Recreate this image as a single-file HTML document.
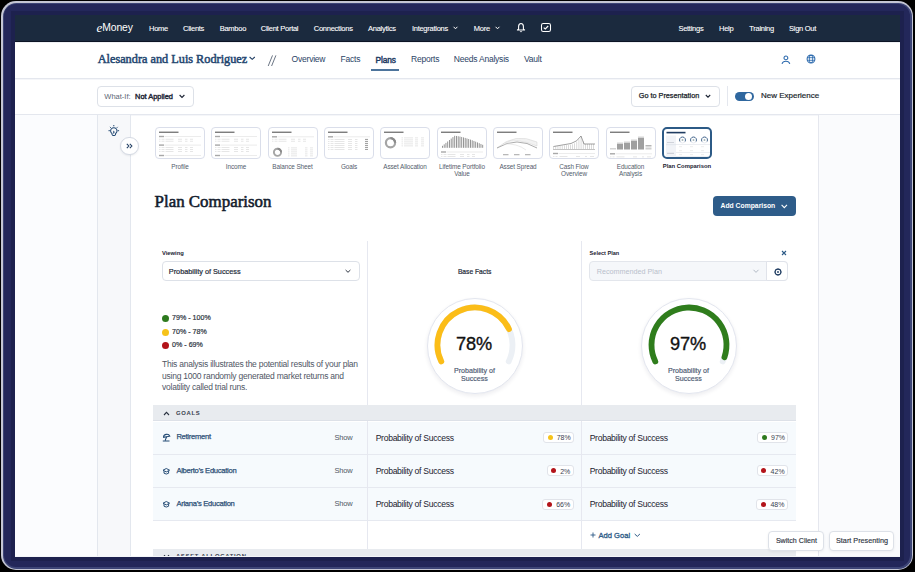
<!DOCTYPE html>
<html><head><meta charset="utf-8">
<style>
*{margin:0;padding:0;box-sizing:border-box}
html,body{width:915px;height:572px;overflow:hidden;background:#000}
body{position:relative;font-family:"Liberation Sans",sans-serif}
.a{position:absolute}
.t{position:absolute;white-space:nowrap;line-height:1}
svg{position:absolute;overflow:visible}
#frame{left:1px;top:1px;width:912px;height:569px;border-radius:15px;background:#c4c6d4}
#frame2{left:2.5px;top:2.5px;width:909px;height:566px;border-radius:13.5px;background:#3d4577}
#frame3{left:4px;top:4px;width:906px;height:562.5px;border-radius:12px;background:#23275a}
#app{left:15px;top:15px;width:885px;height:542px;background:#fff;box-shadow:0 0 0 4px #1d214e}
.nv{color:#fff;font-size:7.5px;letter-spacing:-0.26px;top:24.8px;-webkit-text-stroke:0.1px #fff}
.hb{background:#e4e7ee}
.tab{color:#2a4366;font-size:8.5px;letter-spacing:-0.22px;top:55.3px}
.btn{border:1px solid #dde1e8;border-radius:4px;background:#fff}
.thumb{position:absolute;top:127px;width:50px;height:32px;border:1px solid #dadeea;border-radius:4px;background:#fff;overflow:hidden}
.thumb svg{}
.tl{position:absolute;font-size:6.4px;letter-spacing:-0.1px;color:#545d6c;text-align:center;width:70px;line-height:7px}
.vd{background:#e6e8f0;width:1px}
.row{left:153px;width:643px;height:33px;background:#f6fafd;border-bottom:1px solid #e6e9f0}
.ptxt{font-size:8.6px;letter-spacing:-0.3px;color:#1c2230}
.badge{position:absolute;height:11px;border:1px solid #e1e4ea;border-radius:3px;background:#fff}
.bt{position:absolute;font-size:7px;color:#3a4250;line-height:1;white-space:nowrap}
.dot{position:absolute;border-radius:50%}
.gn{font-size:7.6px;letter-spacing:-0.28px;color:#2d5077;-webkit-text-stroke:0.25px #2d5077}
.show{font-size:7.5px;letter-spacing:-0.2px;color:#4f5866}
</style></head><body>
<div id="frame" class="a"></div><div id="frame2" class="a"></div><div id="frame3" class="a"></div>
<div id="app" class="a"></div>

<!-- ===== top nav ===== -->
<div class="a" style="left:15px;top:15px;width:885px;height:26px;background:#1b2a3e"></div>
<div class="a" style="left:15px;top:41px;width:885px;height:1px;background:#0c1424"></div><div class="a" style="left:15px;top:42px;width:885px;height:1px;background:#eef0f4"></div>
<div class="t" style="left:96.6px;top:20.5px;font-size:13px;color:#fff;font-family:'Liberation Serif',serif;font-style:italic">e</div><div class="t" style="left:102.3px;top:23px;font-size:10.4px;letter-spacing:-0.15px;color:#fff">Money</div>
<div class="t nv" style="left:149px">Home</div>
<div class="t nv" style="left:183px">Clients</div>
<div class="t nv" style="left:219.7px">Bamboo</div>
<div class="t nv" style="left:260.8px">Client Portal</div>
<div class="t nv" style="left:313.8px">Connections</div>
<div class="t nv" style="left:368px">Analytics</div>
<div class="t nv" style="left:411.9px">Integrations</div>
<div class="t nv" style="left:473.8px">More</div>
<svg style="left:453px;top:26px" width="5" height="4" viewBox="0 0 5 4"><path d="M0.6 0.8 L2.5 2.8 L4.4 0.8" fill="none" stroke="#fff" stroke-width="1"/></svg>
<svg style="left:495px;top:26px" width="5" height="4" viewBox="0 0 5 4"><path d="M0.6 0.8 L2.5 2.8 L4.4 0.8" fill="none" stroke="#fff" stroke-width="1"/></svg>
<!-- bell -->
<svg style="left:516px;top:22px" width="10" height="12" viewBox="0 0 10 12"><path d="M2.6 7.3 V4.6 Q2.6 1.5 5 1.5 Q7.4 1.5 7.4 4.6 V7.3 L8.6 8 H1.4 Z" fill="none" stroke="#fff" stroke-width="1.1" stroke-linejoin="round"/><path d="M3.7 9.3 Q5 11.4 6.3 9.3 Z" fill="#fff"/></svg>
<!-- checkbox -->
<svg style="left:541px;top:23px" width="10" height="10" viewBox="0 0 10 10"><rect x="0.5" y="0.5" width="9" height="8" rx="1.8" fill="none" stroke="#fff" stroke-width="1.05"/><path d="M2.7 4.6 L4.3 6 L7.2 3" fill="none" stroke="#fff" stroke-width="1.1"/></svg>
<div class="t nv" style="left:678.4px">Settings</div>
<div class="t nv" style="left:719px">Help</div>
<div class="t nv" style="left:749.2px">Training</div>
<div class="t nv" style="left:789px">Sign Out</div>

<!-- ===== header row 2 ===== -->
<div class="t" style="left:97.7px;top:52.7px;font-family:'Liberation Serif',serif;font-size:12.28px;-webkit-text-stroke:0.5px #234670;color:#234670">Alesandra and Luis Rodriguez</div>
<svg style="left:249.3px;top:56.2px" width="7" height="5" viewBox="0 0 7 5"><path d="M0.6 1 L3.2 3.4 L5.8 1" fill="none" stroke="#1f3c61" stroke-width="1.05"/></svg>
<svg style="left:267px;top:55px" width="10" height="12" viewBox="0 0 10 12"><path d="M5.5 0.4 L1.2 11 M8.9 0.4 L4.6 11" fill="none" stroke="#6b7584" stroke-width="1"/></svg>
<div class="t tab" style="left:291.6px">Overview</div>
<div class="t tab" style="left:340.6px">Facts</div>
<div class="t tab" style="left:375.5px;font-size:8.3px;letter-spacing:-0.1px;top:55.5px;color:#1f3c63;-webkit-text-stroke:0.45px #1f3c63">Plans</div>
<div class="t tab" style="left:411px">Reports</div>
<div class="t tab" style="left:453.8px">Needs Analysis</div>
<div class="t tab" style="left:523.9px">Vault</div>
<div class="a" style="left:371px;top:69px;width:28px;height:2px;background:#4d749c"></div>
<!-- person -->
<svg style="left:781px;top:54.5px" width="10" height="10" viewBox="0 0 10 10"><circle cx="4.9" cy="2.9" r="1.9" fill="none" stroke="#2d6aad" stroke-width="1.05"/><path d="M1 8.8 A4 3.4 0 0 1 8.8 8.8" fill="none" stroke="#2d6aad" stroke-width="1.05"/></svg>
<!-- globe -->
<svg style="left:806px;top:54.3px" width="10" height="10" viewBox="0 0 10 10"><circle cx="5" cy="5" r="3.9" fill="none" stroke="#2d6aad" stroke-width="1.05"/><ellipse cx="5" cy="5" rx="1.7" ry="3.9" fill="none" stroke="#2d6aad" stroke-width="0.85"/><path d="M1.2 3.7 H8.8 M1.2 6.3 H8.8" stroke="#2d6aad" stroke-width="0.85"/></svg>
<div class="a hb" style="left:15px;top:78px;width:885px;height:1px;box-shadow:0 0.5px 0.5px #eceef3"></div>

<!-- ===== row 3 ===== -->
<div class="a btn" style="left:97px;top:86px;width:97px;height:20.5px"></div>
<div class="t" style="left:104.3px;top:92.6px;font-size:7.5px;color:#5d6675">What-If:</div>
<div class="t" style="left:135.1px;top:92.7px;font-size:7.4px;color:#1e2636;-webkit-text-stroke:0.4px #1e2636">Not Applied</div>
<svg style="left:179px;top:94px" width="7" height="5" viewBox="0 0 7 5"><path d="M0.6 1 L3 3.4 L5.4 1" fill="none" stroke="#1e2636" stroke-width="1.15"/></svg>
<div class="a btn" style="left:631px;top:86px;width:88.5px;height:20.5px"></div>
<div class="t" style="left:638.8px;top:92.3px;font-size:7.26px;color:#1a1f2b;-webkit-text-stroke:0.25px #1a1f2b">Go to Presentation</div>
<svg style="left:705px;top:94px" width="6" height="5" viewBox="0 0 6 5"><path d="M0.8 1 L3 3.2 L5.2 1" fill="none" stroke="#1e2636" stroke-width="1.1"/></svg>
<div class="a hb" style="left:727px;top:86px;width:1px;height:20px"></div>
<div class="a" style="left:735px;top:91.5px;width:18.5px;height:9.5px;border-radius:5px;background:#2f679f"></div>
<div class="a" style="left:744.5px;top:92.8px;width:7px;height:7px;border-radius:50%;background:#fff"></div>
<div class="t" style="left:761.1px;top:91.6px;font-size:7.97px;color:#1a1f2b;-webkit-text-stroke:0.2px #1a1f2b">New Experience</div>
<div class="a hb" style="left:15px;top:114px;width:885px;height:1px;box-shadow:0 0.5px 0.5px #eceef3"></div>

<!-- ===== side areas ===== -->
<div class="a" style="left:15px;top:115px;width:82px;height:442px;background:#fbfcfe"></div>
<div class="a" style="left:97px;top:115px;width:34px;height:442px;background:#f7f8fa;border-left:1px solid #e3e7ee;border-right:1.5px solid #e3e7ee"></div>
<div class="a" style="left:818px;top:115px;width:82px;height:442px;background:#fafbfd;border-left:1.5px solid #e5e7ee"></div>
<!-- bulb -->
<svg style="left:108px;top:124px" width="12" height="13" viewBox="0 0 12 13"><path d="M3.96 9.52 A3.2 3.2 0 1 1 7.64 9.52 L7.4 10.8 Q7.3 11.5 6.6 11.5 H5 Q4.3 11.5 4.2 10.8 Z" fill="none" stroke="#234a74" stroke-width="1.05" stroke-linejoin="round"/><path d="M5.8 1 V2.3 M0.5 6.7 H1.9 M9.7 6.7 H11.1 M1.9 2.9 L2.8 3.8 M9.7 2.9 L8.8 3.8" stroke="#234a74" stroke-width="1"/><path d="M5 8 L5.8 6.6 L6.6 8 L5.8 10.3 Z" fill="#234a74"/></svg>
<div class="a" style="left:120.3px;top:137.2px;width:18.3px;height:18.3px;border-radius:50%;background:#fff;border:1px solid #d5dae3;box-shadow:0 1px 2px rgba(30,40,70,.08)"></div>
<svg style="left:126px;top:143px" width="7" height="6" viewBox="0 0 7 6"><path d="M0.8 0.8 L2.9 3 L0.8 5.2 M3.8 0.8 L5.9 3 L3.8 5.2" fill="none" stroke="#1f3c61" stroke-width="1.05"/></svg>

<!-- ===== thumbnails ===== -->
<div id="thumbs"><div class="thumb" style="left:155.00px"><svg style="left:-1px;top:-1px" width="50" height="32" viewBox="0 0 50 32"><rect x="4" y="4.6" width="19.5" height="1.3" fill="#707070"/><rect x="4" y="8.8" width="5" height="1.4" fill="#a8a8a8"/><rect x="9.5" y="9" width="36.5" height="1" fill="#ececec"/><rect x="4" y="11.8" width="1.5" height="0.8" fill="#e0e0e0"/><rect x="6.5" y="11.8" width="3" height="0.8" fill="#e0e0e0"/><rect x="10.5" y="11.8" width="8" height="0.8" fill="#e0e0e0"/><rect x="23" y="11.8" width="4" height="0.8" fill="#e0e0e0"/><rect x="30" y="11.8" width="2.5" height="0.8" fill="#e0e0e0"/><rect x="35" y="11.8" width="3" height="0.8" fill="#e0e0e0"/><rect x="4" y="13.8" width="1.5" height="0.8" fill="#e0e0e0"/><rect x="6.5" y="13.8" width="3" height="0.8" fill="#e0e0e0"/><rect x="10.5" y="13.8" width="8" height="0.8" fill="#e0e0e0"/><rect x="23" y="13.8" width="4" height="0.8" fill="#e0e0e0"/><rect x="30" y="13.8" width="2.5" height="0.8" fill="#e0e0e0"/><rect x="35" y="13.8" width="3" height="0.8" fill="#e0e0e0"/><rect x="4" y="17.400000000000002" width="5" height="1.4" fill="#a8a8a8"/><rect x="9.5" y="17.6" width="36.5" height="1" fill="#ececec"/><rect x="4" y="20" width="1.5" height="0.8" fill="#e0e0e0"/><rect x="6.5" y="20" width="3" height="0.8" fill="#e0e0e0"/><rect x="10.5" y="20" width="8" height="0.8" fill="#e0e0e0"/><rect x="23" y="20" width="4" height="0.8" fill="#e0e0e0"/><rect x="30" y="20" width="2.5" height="0.8" fill="#e0e0e0"/><rect x="35" y="20" width="3" height="0.8" fill="#e0e0e0"/><rect x="4" y="22" width="1.5" height="0.8" fill="#e0e0e0"/><rect x="6.5" y="22" width="3" height="0.8" fill="#e0e0e0"/><rect x="10.5" y="22" width="8" height="0.8" fill="#e0e0e0"/><rect x="23" y="22" width="4" height="0.8" fill="#e0e0e0"/><rect x="30" y="22" width="2.5" height="0.8" fill="#e0e0e0"/><rect x="35" y="22" width="3" height="0.8" fill="#e0e0e0"/><rect x="4" y="24" width="1.5" height="0.8" fill="#e0e0e0"/><rect x="6.5" y="24" width="3" height="0.8" fill="#e0e0e0"/><rect x="10.5" y="24" width="8" height="0.8" fill="#e0e0e0"/><rect x="23" y="24" width="4" height="0.8" fill="#e0e0e0"/><rect x="30" y="24" width="2.5" height="0.8" fill="#e0e0e0"/><rect x="35" y="24" width="3" height="0.8" fill="#e0e0e0"/><rect x="4" y="27.8" width="5" height="1.4" fill="#a8a8a8"/><rect x="9.5" y="28" width="36.5" height="1" fill="#ececec"/></svg></div>
<div class="tl" style="left:145.00px;top:162.7px">Profile</div>
<div class="thumb" style="left:211.00px"><svg style="left:-1px;top:-1px" width="50" height="32" viewBox="0 0 50 32"><rect x="4" y="4.6" width="19.5" height="1.3" fill="#707070"/><rect x="4" y="8.8" width="5" height="1.4" fill="#a8a8a8"/><rect x="9.5" y="9" width="36.5" height="1" fill="#ececec"/><rect x="4" y="11.8" width="1.5" height="0.8" fill="#e0e0e0"/><rect x="6.5" y="11.8" width="3" height="0.8" fill="#e0e0e0"/><rect x="10.5" y="11.8" width="8" height="0.8" fill="#e0e0e0"/><rect x="23" y="11.8" width="4" height="0.8" fill="#e0e0e0"/><rect x="30" y="11.8" width="2.5" height="0.8" fill="#e0e0e0"/><rect x="35" y="11.8" width="3" height="0.8" fill="#e0e0e0"/><rect x="4" y="13.8" width="1.5" height="0.8" fill="#e0e0e0"/><rect x="6.5" y="13.8" width="3" height="0.8" fill="#e0e0e0"/><rect x="10.5" y="13.8" width="8" height="0.8" fill="#e0e0e0"/><rect x="23" y="13.8" width="4" height="0.8" fill="#e0e0e0"/><rect x="30" y="13.8" width="2.5" height="0.8" fill="#e0e0e0"/><rect x="35" y="13.8" width="3" height="0.8" fill="#e0e0e0"/><rect x="4" y="17.400000000000002" width="5" height="1.4" fill="#a8a8a8"/><rect x="9.5" y="17.6" width="36.5" height="1" fill="#ececec"/><rect x="4" y="20" width="1.5" height="0.8" fill="#e0e0e0"/><rect x="6.5" y="20" width="3" height="0.8" fill="#e0e0e0"/><rect x="10.5" y="20" width="8" height="0.8" fill="#e0e0e0"/><rect x="23" y="20" width="4" height="0.8" fill="#e0e0e0"/><rect x="30" y="20" width="2.5" height="0.8" fill="#e0e0e0"/><rect x="35" y="20" width="3" height="0.8" fill="#e0e0e0"/><rect x="4" y="22" width="1.5" height="0.8" fill="#e0e0e0"/><rect x="6.5" y="22" width="3" height="0.8" fill="#e0e0e0"/><rect x="10.5" y="22" width="8" height="0.8" fill="#e0e0e0"/><rect x="23" y="22" width="4" height="0.8" fill="#e0e0e0"/><rect x="30" y="22" width="2.5" height="0.8" fill="#e0e0e0"/><rect x="35" y="22" width="3" height="0.8" fill="#e0e0e0"/><rect x="4" y="24" width="1.5" height="0.8" fill="#e0e0e0"/><rect x="6.5" y="24" width="3" height="0.8" fill="#e0e0e0"/><rect x="10.5" y="24" width="8" height="0.8" fill="#e0e0e0"/><rect x="23" y="24" width="4" height="0.8" fill="#e0e0e0"/><rect x="30" y="24" width="2.5" height="0.8" fill="#e0e0e0"/><rect x="35" y="24" width="3" height="0.8" fill="#e0e0e0"/><rect x="4" y="27.8" width="5" height="1.4" fill="#a8a8a8"/><rect x="9.5" y="28" width="36.5" height="1" fill="#ececec"/></svg></div>
<div class="tl" style="left:201.00px;top:162.7px">Income</div>
<div class="thumb" style="left:267.50px"><svg style="left:-1px;top:-1px" width="50" height="32" viewBox="0 0 50 32"><rect x="4" y="4.6" width="19.5" height="1.3" fill="#707070"/><rect x="4" y="9.100000000000001" width="5" height="1.4" fill="#a8a8a8"/><rect x="9.5" y="9.3" width="36.5" height="1" fill="#ececec"/><rect x="4" y="11.8" width="1.5" height="0.8" fill="#e0e0e0"/><rect x="6.5" y="11.8" width="3" height="0.8" fill="#e0e0e0"/><rect x="10.5" y="11.8" width="8" height="0.8" fill="#e0e0e0"/><rect x="23" y="11.8" width="4" height="0.8" fill="#e0e0e0"/><rect x="30" y="11.8" width="2.5" height="0.8" fill="#e0e0e0"/><rect x="35" y="11.8" width="3" height="0.8" fill="#e0e0e0"/><rect x="4" y="13.8" width="1.5" height="0.8" fill="#e0e0e0"/><rect x="6.5" y="13.8" width="3" height="0.8" fill="#e0e0e0"/><rect x="10.5" y="13.8" width="8" height="0.8" fill="#e0e0e0"/><rect x="23" y="13.8" width="4" height="0.8" fill="#e0e0e0"/><rect x="30" y="13.8" width="2.5" height="0.8" fill="#e0e0e0"/><rect x="35" y="13.8" width="3" height="0.8" fill="#e0e0e0"/><circle cx="9.5" cy="25.3" r="3.6" fill="none" stroke="#a5a5a5" stroke-width="1.9"/><path d="M9.5 21.7 A3.6 3.6 0 0 1 13.1 25.3" fill="none" stroke="#8a8a8a" stroke-width="1.9"/><rect x="20" y="20.5" width="1.5" height="0.8" fill="#e0e0e0"/><rect x="23" y="20.5" width="6" height="0.8" fill="#e0e0e0"/><rect x="37" y="20.5" width="2.5" height="0.8" fill="#e0e0e0"/><rect x="42" y="20.5" width="3" height="0.8" fill="#e0e0e0"/><rect x="20" y="22.5" width="1.5" height="0.8" fill="#e0e0e0"/><rect x="23" y="22.5" width="6" height="0.8" fill="#e0e0e0"/><rect x="37" y="22.5" width="2.5" height="0.8" fill="#e0e0e0"/><rect x="42" y="22.5" width="3" height="0.8" fill="#e0e0e0"/><rect x="20" y="24.5" width="1.5" height="0.8" fill="#e0e0e0"/><rect x="23" y="24.5" width="6" height="0.8" fill="#e0e0e0"/><rect x="37" y="24.5" width="2.5" height="0.8" fill="#e0e0e0"/><rect x="42" y="24.5" width="3" height="0.8" fill="#e0e0e0"/><rect x="20" y="26.5" width="1.5" height="0.8" fill="#e0e0e0"/><rect x="23" y="26.5" width="6" height="0.8" fill="#e0e0e0"/><rect x="37" y="26.5" width="2.5" height="0.8" fill="#e0e0e0"/><rect x="42" y="26.5" width="3" height="0.8" fill="#e0e0e0"/><rect x="20" y="28.5" width="1.5" height="0.8" fill="#e0e0e0"/><rect x="23" y="28.5" width="6" height="0.8" fill="#e0e0e0"/><rect x="37" y="28.5" width="2.5" height="0.8" fill="#e0e0e0"/><rect x="42" y="28.5" width="3" height="0.8" fill="#e0e0e0"/></svg></div>
<div class="tl" style="left:257.50px;top:162.7px">Balance Sheet</div>
<div class="thumb" style="left:324.00px"><svg style="left:-1px;top:-1px" width="50" height="32" viewBox="0 0 50 32"><rect x="4" y="4.6" width="19.5" height="1.3" fill="#707070"/><rect x="4" y="9.100000000000001" width="5" height="1.4" fill="#a8a8a8"/><rect x="9.5" y="9.3" width="36.5" height="1" fill="#ececec"/><rect x="4" y="12" width="1.5" height="0.8" fill="#e0e0e0"/><rect x="6.5" y="12" width="3" height="0.8" fill="#e0e0e0"/><rect x="10.5" y="12" width="10" height="0.8" fill="#e0e0e0"/><rect x="24" y="12" width="4" height="0.8" fill="#e0e0e0"/><rect x="31" y="12" width="2.5" height="0.8" fill="#e0e0e0"/><rect x="41" y="11.9" width="3" height="1" fill="#9a9a9a"/><rect x="4" y="14" width="1.5" height="0.8" fill="#e0e0e0"/><rect x="6.5" y="14" width="3" height="0.8" fill="#e0e0e0"/><rect x="10.5" y="14" width="10" height="0.8" fill="#e0e0e0"/><rect x="24" y="14" width="4" height="0.8" fill="#e0e0e0"/><rect x="31" y="14" width="2.5" height="0.8" fill="#e0e0e0"/><rect x="41" y="13.9" width="3" height="1" fill="#9a9a9a"/><rect x="4" y="16" width="1.5" height="0.8" fill="#e0e0e0"/><rect x="6.5" y="16" width="3" height="0.8" fill="#e0e0e0"/><rect x="10.5" y="16" width="10" height="0.8" fill="#e0e0e0"/><rect x="24" y="16" width="4" height="0.8" fill="#e0e0e0"/><rect x="31" y="16" width="2.5" height="0.8" fill="#e0e0e0"/><rect x="41" y="15.9" width="3" height="1" fill="#9a9a9a"/><rect x="4" y="18" width="1.5" height="0.8" fill="#e0e0e0"/><rect x="6.5" y="18" width="3" height="0.8" fill="#e0e0e0"/><rect x="10.5" y="18" width="10" height="0.8" fill="#e0e0e0"/><rect x="24" y="18" width="4" height="0.8" fill="#e0e0e0"/><rect x="31" y="18" width="2.5" height="0.8" fill="#e0e0e0"/><rect x="41" y="17.9" width="3" height="1" fill="#9a9a9a"/><rect x="4" y="20" width="1.5" height="0.8" fill="#e0e0e0"/><rect x="6.5" y="20" width="3" height="0.8" fill="#e0e0e0"/><rect x="10.5" y="20" width="10" height="0.8" fill="#e0e0e0"/><rect x="24" y="20" width="4" height="0.8" fill="#e0e0e0"/><rect x="31" y="20" width="2.5" height="0.8" fill="#e0e0e0"/><rect x="41" y="19.9" width="3" height="1" fill="#9a9a9a"/><rect x="4" y="22" width="1.5" height="0.8" fill="#e0e0e0"/><rect x="6.5" y="22" width="3" height="0.8" fill="#e0e0e0"/><rect x="10.5" y="22" width="10" height="0.8" fill="#e0e0e0"/><rect x="24" y="22" width="4" height="0.8" fill="#e0e0e0"/><rect x="31" y="22" width="2.5" height="0.8" fill="#e0e0e0"/><rect x="41" y="21.9" width="3" height="1" fill="#9a9a9a"/></svg></div>
<div class="tl" style="left:314.00px;top:162.7px">Goals</div>
<div class="thumb" style="left:380.00px"><svg style="left:-1px;top:-1px" width="50" height="32" viewBox="0 0 50 32"><rect x="4" y="4.6" width="19.5" height="1.3" fill="#707070"/><circle cx="10.5" cy="15.8" r="4.6" fill="none" stroke="#a5a5a5" stroke-width="2.2"/><path d="M10.5 11.2 A4.6 4.6 0 0 1 15.1 15.8" fill="none" stroke="#8a8a8a" stroke-width="2.2"/><rect x="21.5" y="10.5" width="1.5" height="0.8" fill="#e0e0e0"/><rect x="24" y="10.5" width="9" height="0.8" fill="#e0e0e0"/><rect x="35" y="10.5" width="3" height="0.8" fill="#e0e0e0"/><rect x="41" y="10.5" width="3" height="0.8" fill="#e0e0e0"/><rect x="21.5" y="12.5" width="1.5" height="0.8" fill="#e0e0e0"/><rect x="24" y="12.5" width="9" height="0.8" fill="#e0e0e0"/><rect x="35" y="12.5" width="3" height="0.8" fill="#e0e0e0"/><rect x="41" y="12.5" width="3" height="0.8" fill="#e0e0e0"/><rect x="21.5" y="14.5" width="1.5" height="0.8" fill="#e0e0e0"/><rect x="24" y="14.5" width="9" height="0.8" fill="#e0e0e0"/><rect x="35" y="14.5" width="3" height="0.8" fill="#e0e0e0"/><rect x="41" y="14.5" width="3" height="0.8" fill="#e0e0e0"/><rect x="21.5" y="16.5" width="1.5" height="0.8" fill="#e0e0e0"/><rect x="24" y="16.5" width="9" height="0.8" fill="#e0e0e0"/><rect x="35" y="16.5" width="3" height="0.8" fill="#e0e0e0"/><rect x="41" y="16.5" width="3" height="0.8" fill="#e0e0e0"/><rect x="21.5" y="18.5" width="1.5" height="0.8" fill="#e0e0e0"/><rect x="24" y="18.5" width="9" height="0.8" fill="#e0e0e0"/><rect x="35" y="18.5" width="3" height="0.8" fill="#e0e0e0"/><rect x="41" y="18.5" width="3" height="0.8" fill="#e0e0e0"/></svg></div>
<div class="tl" style="left:370.00px;top:162.7px">Asset Allocation</div>
<div class="thumb" style="left:437.00px"><svg style="left:-1px;top:-1px" width="50" height="32" viewBox="0 0 50 32"><rect x="4" y="4.6" width="19.5" height="1.3" fill="#707070"/><rect x="5.0" y="18.8" width="0.9" height="2.0" fill="#8a8a8a"/><rect x="6.75" y="17.35" width="0.9" height="3.45" fill="#8a8a8a"/><rect x="8.5" y="15.9" width="0.9" height="4.9" fill="#8a8a8a"/><rect x="10.25" y="14.45" width="0.9" height="6.35" fill="#8a8a8a"/><rect x="12.0" y="13.0" width="0.9" height="7.8" fill="#8a8a8a"/><rect x="13.75" y="11.55" width="0.9" height="9.25" fill="#8a8a8a"/><rect x="15.5" y="10.1" width="0.9" height="10.7" fill="#8a8a8a"/><rect x="17.25" y="8.8" width="0.9" height="12.0" fill="#8a8a8a"/><rect x="19.0" y="8.96" width="0.9" height="11.84" fill="#8a8a8a"/><rect x="20.75" y="9.22" width="0.9" height="11.58" fill="#8a8a8a"/><rect x="22.5" y="9.56" width="0.9" height="11.24" fill="#8a8a8a"/><rect x="24.25" y="9.96" width="0.9" height="10.84" fill="#8a8a8a"/><rect x="26.0" y="10.4" width="0.9" height="10.4" fill="#8a8a8a"/><rect x="27.75" y="10.9" width="0.9" height="9.9" fill="#8a8a8a"/><rect x="29.5" y="11.44" width="0.9" height="9.36" fill="#8a8a8a"/><rect x="31.25" y="12.01" width="0.9" height="8.79" fill="#8a8a8a"/><rect x="33.0" y="12.62" width="0.9" height="8.18" fill="#8a8a8a"/><rect x="34.75" y="13.27" width="0.9" height="7.53" fill="#8a8a8a"/><rect x="36.5" y="13.95" width="0.9" height="6.85" fill="#8a8a8a"/><rect x="38.25" y="14.66" width="0.9" height="6.14" fill="#8a8a8a"/><rect x="40.0" y="15.41" width="0.9" height="5.39" fill="#8a8a8a"/><rect x="41.75" y="16.18" width="0.9" height="4.62" fill="#8a8a8a"/><rect x="43.5" y="16.97" width="0.9" height="3.83" fill="#8a8a8a"/><rect x="45.25" y="17.8" width="0.9" height="3.0" fill="#8a8a8a"/><rect x="4" y="24.3" width="5" height="1.4" fill="#a8a8a8"/><rect x="9.5" y="24.5" width="36.5" height="1" fill="#ececec"/><rect x="4" y="27" width="1.5" height="0.8" fill="#e0e0e0"/><rect x="6.5" y="27" width="3" height="0.8" fill="#e0e0e0"/><rect x="10.5" y="27" width="8" height="0.8" fill="#e0e0e0"/><rect x="23" y="27" width="4" height="0.8" fill="#e0e0e0"/><rect x="30" y="27" width="2.5" height="0.8" fill="#e0e0e0"/><rect x="35" y="27" width="3" height="0.8" fill="#e0e0e0"/><rect x="4" y="29" width="1.5" height="0.8" fill="#e0e0e0"/><rect x="6.5" y="29" width="3" height="0.8" fill="#e0e0e0"/><rect x="10.5" y="29" width="8" height="0.8" fill="#e0e0e0"/><rect x="23" y="29" width="4" height="0.8" fill="#e0e0e0"/><rect x="30" y="29" width="2.5" height="0.8" fill="#e0e0e0"/><rect x="35" y="29" width="3" height="0.8" fill="#e0e0e0"/></svg></div>
<div class="tl" style="left:427.00px;top:162.7px">Lifetime Portfolio<br>Value</div>
<div class="thumb" style="left:493.00px"><svg style="left:-1px;top:-1px" width="50" height="32" viewBox="0 0 50 32"><rect x="4" y="4.6" width="19.5" height="1.3" fill="#707070"/><path d="M4 21 Q22 5 44 15 L44 19 Q22 10 12 16" fill="#f2f2f2" stroke="#d0d0d0" stroke-width="0.5"/><path d="M4 21 Q24 9 44 21" fill="none" stroke="#8a8a8a" stroke-width="0.7"/><path d="M10 17 Q24 16 33 23" fill="none" stroke="#dcdcdc" stroke-width="0.6"/><rect x="10" y="27.3" width="5.5" height="0.9" fill="#9a9a9a"/><rect x="21" y="27.3" width="5.5" height="0.9" fill="#9a9a9a"/><rect x="32" y="27.3" width="5.5" height="0.9" fill="#9a9a9a"/></svg></div>
<div class="tl" style="left:483.00px;top:162.7px">Asset Spread</div>
<div class="thumb" style="left:549.00px"><svg style="left:-1px;top:-1px" width="50" height="32" viewBox="0 0 50 32"><rect x="4" y="4.6" width="19.5" height="1.3" fill="#707070"/><rect x="4.5" y="19.5" width="0.5" height="2.5" fill="#b5b5b5"/><rect x="6.6" y="19.27" width="0.5" height="2.73" fill="#b5b5b5"/><rect x="8.7" y="19.04" width="0.5" height="2.96" fill="#b5b5b5"/><rect x="10.8" y="18.81" width="0.5" height="3.19" fill="#b5b5b5"/><rect x="12.9" y="18.58" width="0.5" height="3.42" fill="#b5b5b5"/><rect x="15.0" y="18.35" width="0.5" height="3.65" fill="#b5b5b5"/><rect x="17.1" y="18.13" width="0.5" height="3.87" fill="#b5b5b5"/><rect x="19.2" y="17.9" width="0.5" height="4.1" fill="#b5b5b5"/><rect x="21.3" y="17.67" width="0.5" height="4.33" fill="#b5b5b5"/><rect x="23.4" y="17.29" width="0.5" height="4.71" fill="#b5b5b5"/><rect x="25.5" y="16.29" width="0.5" height="5.71" fill="#b5b5b5"/><rect x="27.6" y="14.63" width="0.5" height="7.37" fill="#b5b5b5"/><rect x="29.7" y="12.3" width="0.5" height="9.7" fill="#b5b5b5"/><rect x="31.8" y="9.32" width="0.5" height="12.68" fill="#b5b5b5"/><rect x="33.9" y="14.07" width="0.5" height="7.93" fill="#b5b5b5"/><rect x="36.0" y="17" width="0.5" height="5" fill="#b5b5b5"/><rect x="38.1" y="17" width="0.5" height="5" fill="#b5b5b5"/><rect x="40.2" y="17" width="0.5" height="5" fill="#b5b5b5"/><rect x="42.3" y="17" width="0.5" height="5" fill="#b5b5b5"/><rect x="44.4" y="17" width="0.5" height="5" fill="#b5b5b5"/><path d="M4.5 19.5 L22 16.5 Q28 15 32 9 L35 17 L46 17" fill="none" stroke="#777" stroke-width="0.7"/><rect x="4" y="22" width="42" height="0.6" fill="#999"/><rect x="4" y="25.8" width="5" height="1.4" fill="#a8a8a8"/><rect x="9.5" y="26" width="36.5" height="1" fill="#ececec"/><rect x="4" y="29" width="1.5" height="0.8" fill="#e0e0e0"/><rect x="6.5" y="29" width="2" height="0.8" fill="#e0e0e0"/><rect x="10.5" y="29" width="8" height="0.8" fill="#e0e0e0"/><rect x="27" y="29" width="4" height="0.8" fill="#e0e0e0"/><rect x="36" y="29" width="2" height="0.8" fill="#e0e0e0"/><rect x="41" y="29" width="4" height="0.8" fill="#e0e0e0"/></svg></div>
<div class="tl" style="left:539.00px;top:162.7px">Cash Flow<br>Overview</div>
<div class="thumb" style="left:605.50px"><svg style="left:-1px;top:-1px" width="50" height="32" viewBox="0 0 50 32"><rect x="4" y="4.6" width="19.5" height="1.3" fill="#707070"/><rect x="4" y="21" width="6" height="1.5" fill="#d5d5d5"/><rect x="4" y="22.5" width="6" height="0.0" fill="#a0a0a0"/><rect x="11" y="15.5" width="6" height="1.5" fill="#d5d5d5"/><rect x="11" y="17.0" width="6" height="5.5" fill="#a0a0a0"/><rect x="18" y="14.5" width="6" height="1.5" fill="#d5d5d5"/><rect x="18" y="16.0" width="6" height="6.5" fill="#a0a0a0"/><rect x="25" y="12.5" width="6" height="1.5" fill="#d5d5d5"/><rect x="25" y="14.0" width="6" height="8.5" fill="#a0a0a0"/><rect x="32" y="9.5" width="6" height="1.5" fill="#d5d5d5"/><rect x="32" y="11.0" width="6" height="11.5" fill="#a0a0a0"/><rect x="39.5" y="18" width="6" height="1.5" fill="#b5b5b5"/><rect x="39.5" y="20.5" width="6" height="2" fill="#d0d0d0"/><rect x="4" y="26.1" width="5" height="1.4" fill="#a8a8a8"/><rect x="9.5" y="26.3" width="36.5" height="1" fill="#ececec"/><rect x="4" y="29.5" width="1.5" height="0.8" fill="#e0e0e0"/><rect x="6.5" y="29.5" width="2" height="0.8" fill="#e0e0e0"/><rect x="10.5" y="29.5" width="8" height="0.8" fill="#e0e0e0"/><rect x="27" y="29.5" width="4" height="0.8" fill="#e0e0e0"/><rect x="36" y="29.5" width="2" height="0.8" fill="#e0e0e0"/><rect x="41" y="29.5" width="4" height="0.8" fill="#e0e0e0"/></svg></div>
<div class="tl" style="left:595.50px;top:162.7px">Education<br>Analysis</div>
<div class="thumb" style="left:662.00px;border:2px solid #2c5a86;border-radius:5px"><svg style="left:-2px;top:-2px" width="50" height="32" viewBox="0 0 50 32"><rect x="4.5" y="4.8" width="19" height="1.6" fill="#1f3c61"/><rect x="4" y="8.5" width="10" height="22" fill="#f1f3f7"/><circle cx="20.5" cy="13" r="3" fill="none" stroke="#e5e8ee" stroke-width="0.9"/><path d="M17.9 14.5 A3 3 0 1 1 23.1 14.5" fill="none" stroke="#40638a" stroke-width="0.9"/><rect x="19.7" y="12.2" width="1.6" height="1.6" fill="#9aa"/><circle cx="31.5" cy="13" r="3" fill="none" stroke="#e5e8ee" stroke-width="0.9"/><path d="M28.9 14.5 A3 3 0 1 1 34.1 14.5" fill="none" stroke="#40638a" stroke-width="0.9"/><rect x="30.7" y="12.2" width="1.6" height="1.6" fill="#9aa"/><circle cx="42.5" cy="13" r="3" fill="none" stroke="#e5e8ee" stroke-width="0.9"/><path d="M39.9 14.5 A3 3 0 1 1 45.1 14.5" fill="none" stroke="#40638a" stroke-width="0.9"/><rect x="41.7" y="12.2" width="1.6" height="1.6" fill="#9aa"/><rect x="14" y="17.5" width="34" height="0.5" fill="#d8dde5"/><rect x="14" y="25" width="34" height="0.5" fill="#d8dde5"/><rect x="14" y="29" width="34" height="0.5" fill="#d8dde5"/><rect x="17" y="19.5" width="3" height="0.6" fill="#e0e0e0"/><rect x="28" y="19.5" width="3" height="0.6" fill="#e0e0e0"/><rect x="39" y="19.5" width="3" height="0.6" fill="#e0e0e0"/><rect x="17" y="23.5" width="3" height="0.6" fill="#e0e0e0"/><rect x="28" y="23.5" width="3" height="0.6" fill="#e0e0e0"/><rect x="39" y="23.5" width="3" height="0.6" fill="#e0e0e0"/><rect x="17" y="27.5" width="3" height="0.6" fill="#e0e0e0"/><rect x="28" y="27.5" width="3" height="0.6" fill="#e0e0e0"/><rect x="39" y="27.5" width="3" height="0.6" fill="#e0e0e0"/><rect x="4" y="17.5" width="10" height="0.6" fill="#d8dde5"/><rect x="5" y="15" width="7" height="1" fill="#d0d3da"/><rect x="5" y="25.8" width="7" height="1" fill="#c5c9d2"/></svg></div>
<div class="tl" style="left:652.00px;top:162.7px;font-weight:bold;color:#1a2231;font-size:5.9px;letter-spacing:0">Plan Comparison</div></div><!--/thumbs-->

<!-- ===== title ===== -->
<div class="t" style="left:154.6px;top:194.3px;font-family:'Liberation Serif',serif;font-size:16.9px;-webkit-text-stroke:0.55px #121b2c;color:#121b2c">Plan Comparison</div>
<div class="a" style="left:713px;top:196px;width:83px;height:19.5px;border-radius:4px;background:#2e5c89"></div>
<div class="t" style="left:720.5px;top:202.8px;font-size:6.8px;font-weight:bold;color:#fff">Add Comparison</div>
<svg style="left:780.5px;top:203.5px" width="7" height="5" viewBox="0 0 7 5"><path d="M0.6 0.9 L3.3 3.6 L6 0.9" fill="none" stroke="#fff" stroke-width="1.1"/></svg>

<!-- ===== comparison ===== -->
<div class="a vd" style="left:367px;top:241px;height:307.5px"></div>
<div class="a vd" style="left:581px;top:241px;height:307.5px"></div>
<div class="t" style="left:162px;top:250.8px;font-size:5.8px;font-weight:bold;color:#1a2231">Viewing</div>
<div class="a btn" style="left:161.5px;top:261.3px;width:198.2px;height:19.8px"></div>
<div class="t" style="left:168.8px;top:267.5px;font-size:7.3px;color:#232a38;-webkit-text-stroke:0.2px #232a38">Probability of Success</div>
<svg style="left:345px;top:269px" width="6" height="5" viewBox="0 0 6 5"><path d="M0.6 1 L3 3.3 L5.4 1" fill="none" stroke="#232a38" stroke-width="0.95"/></svg>
<div class="t" style="left:457.9px;top:268.8px;font-size:6.7px;color:#232a38;-webkit-text-stroke:0.2px #232a38">Base Facts</div>
<div class="t" style="left:589.6px;top:250.7px;font-size:5.55px;font-weight:bold;color:#1a2231">Select Plan</div>
<svg style="left:781px;top:250px" width="6" height="6" viewBox="0 0 6 6"><path d="M1 1 L5 5 M5 1 L1 5" stroke="#2c5a86" stroke-width="1.1"/></svg>
<div class="a btn" style="left:589px;top:261.2px;width:199px;height:19.8px;background:#f5f7fa;border-color:#e3e6ec"></div>
<div class="a" style="left:766px;top:261.2px;width:22px;height:19.8px;background:#fff;border:1px solid #e0e3ea;border-radius:0 4px 4px 0"></div>
<div class="t" style="left:596.8px;top:267.6px;font-size:7.2px;color:#b9c0cb">Recommended Plan</div>
<svg style="left:752.5px;top:269px" width="7" height="5" viewBox="0 0 7 5"><path d="M0.5 0.8 L3 3.4 L5.5 0.8" fill="none" stroke="#aab2be" stroke-width="0.9"/></svg>
<svg style="left:773.5px;top:267.5px" width="8" height="8" viewBox="0 0 8 8"><circle cx="4" cy="4" r="2.9" fill="none" stroke="#1f3c61" stroke-width="1.1"/><path d="M4 0.4 V1.4 M4 6.6 V7.6 M0.4 4 H1.4 M6.6 4 H7.6" stroke="#1f3c61" stroke-width="1"/><circle cx="4" cy="4" r="0.9" fill="#1f3c61"/></svg>

<div class="dot" style="left:161.5px;top:315px;width:7px;height:7px;background:#2e7a1e"></div>
<div class="dot" style="left:161.5px;top:328.5px;width:7px;height:7px;background:#f6c31a"></div>
<div class="dot" style="left:161.5px;top:342.2px;width:7px;height:7px;background:#b3141a"></div>
<div class="t" style="left:172.1px;top:315px;font-size:7.1px;color:#2e3542;-webkit-text-stroke:0.2px #2e3542">79% - 100%</div>
<div class="t" style="left:172.1px;top:328.5px;font-size:7.1px;color:#2e3542;-webkit-text-stroke:0.2px #2e3542">70% - 78%</div>
<div class="t" style="left:172.1px;top:342.2px;font-size:7.1px;color:#2e3542;-webkit-text-stroke:0.2px #2e3542">0% - 69%</div>
<div class="t" style="left:162px;top:358.9px;font-size:8.5px;letter-spacing:-0.24px;line-height:11.75px;color:#4f5665;white-space:normal;width:205px">This analysis illustrates the potential results of your plan using 1000 randomly generated market returns and volatility called trial runs.</div>

<!-- gauges -->
<div class="a" style="left:426.5px;top:297.5px;width:96px;height:96px;border-radius:50%;background:#fff;border:1px solid #e3e6ef;box-shadow:0 2px 4px rgba(20,30,60,.08)"></div>
<div class="a" style="left:640.5px;top:297.5px;width:96px;height:96px;border-radius:50%;background:#fff;border:1px solid #e3e6ef;box-shadow:0 2px 4px rgba(20,30,60,.08)"></div>
<svg style="left:474.5px;top:344.8px" width="1" height="1"><path d="M-33.70 16.44 A37.5 37.5 0 1 1 33.70 16.44" fill="none" stroke="#ecf0f5" stroke-width="5.8" stroke-linecap="round"/><path d="M-33.70 16.44 A37.5 37.5 0 1 1 33.98 -15.87" fill="none" stroke="#fbbd18" stroke-width="5.8" stroke-linecap="round"/></svg>
<svg style="left:688.5px;top:344.8px" width="1" height="1"><path d="M-33.70 16.44 A37.5 37.5 0 1 1 33.70 16.44" fill="none" stroke="#ecf0f5" stroke-width="5.8" stroke-linecap="round"/><path d="M-33.70 16.44 A37.5 37.5 0 1 1 35.45 12.23" fill="none" stroke="#2f7d1c" stroke-width="5.8" stroke-linecap="round"/></svg>
<div class="t" style="left:455.9px;top:335.2px;font-size:18.2px;color:#111;-webkit-text-stroke:0.35px #111">78%</div>
<div class="t" style="left:669.9px;top:335.2px;font-size:18.2px;color:#111;-webkit-text-stroke:0.35px #111">97%</div>
<div class="t" style="left:434.5px;top:366.9px;width:80px;text-align:center;font-size:7.1px;line-height:8.2px;color:#4b5870;-webkit-text-stroke:0.15px #4b5870">Probability of<br>Success</div>
<div class="t" style="left:648.5px;top:366.9px;width:80px;text-align:center;font-size:7.1px;line-height:8.2px;color:#4b5870;-webkit-text-stroke:0.15px #4b5870">Probability of<br>Success</div>

<!-- ===== goals ===== -->
<div class="a" style="left:153px;top:405.2px;width:643px;height:16.2px;background:#e8ebef;border-bottom:1px solid #dde1e8"></div>
<svg style="left:163px;top:410.5px" width="7" height="5" viewBox="0 0 7 5"><path d="M1 4 L3.5 1.4 L6 4" fill="none" stroke="#2a3240" stroke-width="1.1"/></svg>
<div class="t" style="left:175.9px;top:411.2px;font-size:5.9px;font-weight:bold;letter-spacing:0.72px;color:#3a4250">GOALS</div>
<div class="a row" style="top:421.6px"></div>
<div class="a row" style="top:454.6px"></div>
<div class="a row" style="top:487.8px;height:32.8px"></div>
<div class="a vd" style="left:367px;top:421.6px;height:127px"></div>
<div class="a vd" style="left:581px;top:421.6px;height:127px"></div>
<!-- goal icons -->
<svg style="left:161.5px;top:433px" width="9" height="9" viewBox="0 0 9 9"><path d="M1.6 4.4 A3.2 2.8 0 0 1 7.8 3.2 Z" fill="none" stroke="#234a74" stroke-width="1.1"/><path d="M4.6 3.8 L3.2 7.4 M0.8 8 H7.5" stroke="#234a74" stroke-width="1.1"/></svg>
<svg style="left:161.5px;top:467px" width="9" height="9" viewBox="0 0 9 9"><path d="M1 3.2 L4.3 1.5 L7.6 3.2 L4.3 4.9 Z" fill="none" stroke="#2a5079" stroke-width="1" stroke-linejoin="round"/><path d="M2 4 V6.2 Q4.3 7.9 6.6 6.2 V4" fill="none" stroke="#2a5079" stroke-width="1"/></svg>
<svg style="left:161.5px;top:499.7px" width="9" height="9" viewBox="0 0 9 9"><path d="M1 3.2 L4.3 1.5 L7.6 3.2 L4.3 4.9 Z" fill="none" stroke="#2a5079" stroke-width="1" stroke-linejoin="round"/><path d="M2 4 V6.2 Q4.3 7.9 6.6 6.2 V4" fill="none" stroke="#2a5079" stroke-width="1"/></svg>
<div class="t gn" style="left:176.4px;top:433.4px">Retirement</div>
<div class="t gn" style="left:176.4px;top:467px">Alberto’s Education</div>
<div class="t gn" style="left:176.4px;top:499.7px">Ariana’s Education</div>
<div class="t show" style="left:334.4px;top:433.8px">Show</div>
<div class="t show" style="left:334.4px;top:467.4px">Show</div>
<div class="t show" style="left:334.4px;top:500.1px">Show</div>
<div class="t ptxt" style="left:375.7px;top:433.9px">Probability of Success</div>
<div class="t ptxt" style="left:375.7px;top:467.2px">Probability of Success</div>
<div class="t ptxt" style="left:375.7px;top:500.1px">Probability of Success</div>
<div class="t ptxt" style="left:589.7px;top:433.9px">Probability of Success</div>
<div class="t ptxt" style="left:589.7px;top:467.2px">Probability of Success</div>
<div class="t ptxt" style="left:589.7px;top:500.1px">Probability of Success</div>
<!-- badges -->
<div class="badge" style="left:542.9px;top:432.1px;width:30.7px"></div><div class="dot" style="left:548px;top:435px;width:5px;height:5px;background:#f6c31a"></div><div class="bt" style="left:556.7px;top:434.4px">78%</div>
<div class="badge" style="left:546.5px;top:465.4px;width:27.1px"></div><div class="dot" style="left:551px;top:468px;width:5px;height:5px;background:#b3141a"></div><div class="bt" style="left:560.2px;top:467.7px">2%</div>
<div class="badge" style="left:542.3px;top:498.7px;width:31.3px"></div><div class="dot" style="left:547px;top:502px;width:5px;height:5px;background:#b3141a"></div><div class="bt" style="left:556.2px;top:501.0px">66%</div>
<div class="badge" style="left:757.3px;top:432.1px;width:30.5px"></div><div class="dot" style="left:762px;top:435px;width:5px;height:5px;background:#2e7a1e"></div><div class="bt" style="left:771px;top:434.4px">97%</div>
<div class="badge" style="left:756.8px;top:465.4px;width:31px"></div><div class="dot" style="left:761px;top:468px;width:5px;height:5px;background:#b3141a"></div><div class="bt" style="left:770.6px;top:467.7px">42%</div>
<div class="badge" style="left:756px;top:498.7px;width:31.8px"></div><div class="dot" style="left:761px;top:502px;width:5px;height:5px;background:#b3141a"></div><div class="bt" style="left:770.4px;top:501.0px">48%</div>

<svg style="left:590px;top:532.3px" width="6" height="6" viewBox="0 0 6 6"><path d="M3 0.5 V5.5 M0.5 3 H5.5" stroke="#2c5a86" stroke-width="0.9"/></svg><div class="t" style="left:598.5px;top:531.6px;font-size:7.6px;color:#2c5a86;-webkit-text-stroke:0.3px #2c5a86">Add Goal</div>
<svg style="left:634px;top:533.2px" width="7" height="5" viewBox="0 0 7 5"><path d="M0.7 1 L3.3 3.4 L5.9 1" fill="none" stroke="#2c5a86" stroke-width="1"/></svg>
<div class="a" style="left:153px;top:548.6px;width:643px;height:9px;background:#e8ebef"></div>
<div class="t" style="left:175.9px;top:553.8px;font-size:5.9px;font-weight:bold;letter-spacing:0.72px;color:#3a4250">ASSET ALLOCATION</div><svg style="left:163px;top:554px" width="7" height="5" viewBox="0 0 7 5"><path d="M1 1.2 L3.5 3.8 L6 1.2" fill="none" stroke="#2a3240" stroke-width="1.1"/></svg>

<div class="a btn" style="left:768.2px;top:530.7px;width:55.6px;height:20px;box-shadow:0 1px 3px rgba(0,0,0,.06)"></div>
<div class="t" style="left:775.9px;top:537.6px;font-size:7.1px;color:#2f3642;-webkit-text-stroke:0.15px #2f3642">Switch Client</div>
<div class="a btn" style="left:829px;top:530.7px;width:65.1px;height:20px;box-shadow:0 1px 3px rgba(0,0,0,.06)"></div>
<div class="t" style="left:836px;top:537.4px;font-size:7.25px;color:#2f3642;-webkit-text-stroke:0.15px #2f3642">Start Presenting</div>

<!-- bottom frame overlay (covers content overflow) -->
<div class="a" style="left:15px;top:556px;width:885px;height:1px;background:#f4f6f9"></div><div class="a" style="left:15px;top:557px;width:885px;height:9.5px;background:#23275a;box-shadow:inset 0 4px 0 #1d214e"></div>
</body></html>
